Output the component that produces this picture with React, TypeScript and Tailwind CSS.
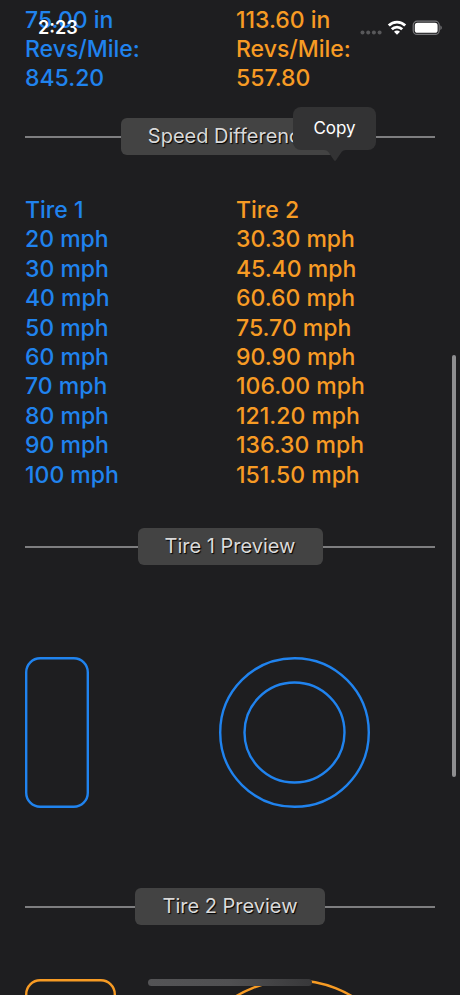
import type { ReactNode } from "react";

const speeds = [
    ["20 mph", "30.30 mph"],
    ["30 mph", "45.40 mph"],
    ["40 mph", "60.60 mph"],
    ["50 mph", "75.70 mph"],
    ["60 mph", "90.90 mph"],
    ["70 mph", "106.00 mph"],
    ["80 mph", "121.20 mph"],
    ["90 mph", "136.30 mph"],
    ["100 mph", "151.50 mph"],
];

function StatusBar() {
    return (
        <div className="absolute inset-x-0 top-0 z-20 flex items-center justify-between pt-4 pr-[18px] pl-[38px] pointer-events-none">
            <time className="text-lg leading-6 font-semibold text-white">2:23</time>
            <svg width="82" height="24" viewBox="0 0 82 24" fill="none">
                <g fill="#58585a">
                    <circle cx="2.5" cy="16.5" r="2" />
                    <circle cx="8.2" cy="16.5" r="2" />
                    <circle cx="13.9" cy="16.5" r="2" />
                    <circle cx="19.6" cy="16.5" r="2" />
                </g>
                <g stroke="#fff" strokeWidth="2.8">
                    <path d="M28.8 9.6a11.6 11.6 0 0 1 16.4 0" />
                    <path d="M31.8 13.2a7.4 7.4 0 0 1 10.4 0" />
                </g>
                <path d="M37 18.8l-3-3a4.2 4.2 0 0 1 6 0z" fill="#fff" />
                <rect x="53.2" y="5.2" width="26" height="13.2" rx="4" stroke="#77777a" strokeWidth="1.2" />
                <rect x="54.8" y="6.8" width="22.8" height="10" rx="2.6" fill="#fff" />
                <path d="M80.4 9.600c1.800.7 1.800 3.700 0 4.400z" fill="#77777a" />
            </svg>
        </div>
    );
}

function Divider({ title, children }: { title: string; children?: ReactNode }) {
    return (
        <div className="relative flex items-center">
            <div className="h-[2px] flex-1 bg-[#7e7e80]" />
            <h2 className="rounded-md bg-[#434343] px-[27px] text-xl leading-[37px] text-[#dadada] [text-shadow:1px_1px_1px_#000]">
                {title}
            </h2>
            <div className="h-[2px] flex-1 bg-[#7e7e80]" />
            {children}
        </div>
    );
}

function CopyMenu() {
    return (
        <button
            type="button"
            className="absolute -top-[11px] right-[59px] z-10 h-[43px] w-[83px] rounded-lg bg-[#333334] text-[17px] text-white"
        >
            Copy
            <svg className="absolute top-full left-[31px]" width="22" height="11" viewBox="0 0 22 11" fill="#333334">
                <path d="M0 0h22c-2 0-3.2.8-4.4 2L12 10.2q-1 1-2 0L4.4 2C3.2.8 2 0 0 0z" />
            </svg>
        </button>
    );
}

// side view on the left, wheel view on the right
function TirePreview({ width, diameter, rim, color }: { width: number; diameter: number; rim: number; color: string }) {
    const r = diameter / 2;
    return (
        <div className={`grid grid-cols-[7fr_13fr] pr-[11px] ${color}`}>
            <svg width={width} height={diameter} fill="none" stroke="currentColor" strokeWidth="2.4">
                <rect x="1.2" y="1.2" width={width - 2.4} height={diameter - 2.4} rx="14" />
            </svg>
            <svg className="justify-self-center" width={diameter} height={diameter} fill="none" stroke="currentColor" strokeWidth="2.4">
                <circle cx={r} cy={r} r={r - 1.2} />
                <circle cx={r} cy={r} r={rim / 2} />
            </svg>
        </div>
    );
}

export default function App() {
    return (
        <div className="relative h-screen overflow-hidden bg-[#1e1e20] font-[Inter,'Liberation_Sans',sans-serif]">
            <StatusBar />

            <main className="h-full overflow-y-auto px-[25px] pt-[6px] [scrollbar-width:none]">
                <div className="grid grid-cols-2 gap-3 pb-[25px] text-[23px] leading-[29px] font-medium">
                    <div className="text-[#2083ee]">
                        <p>75.00 in</p>
                        <p>Revs/Mile:</p>
                        <p>845.20</p>
                    </div>
                    <div className="text-[#f79b24]">
                        <p>113.60 in</p>
                        <p>Revs/Mile:</p>
                        <p>557.80</p>
                    </div>
                </div>

                <Divider title="Speed Difference">
                    <CopyMenu />
                </Divider>

                <table className="mt-[41px] h-[294px] w-full table-fixed text-left text-[23px] leading-[29px] font-medium">
                    <thead>
                        <tr>
                            <th className="w-[211px] p-0 font-medium text-[#2083ee]">Tire 1</th>
                            <th className="p-0 font-medium text-[#f79b24]">Tire 2</th>
                        </tr>
                    </thead>
                    <tbody>
                        {speeds.map(([first, second]) => (
                            <tr key={first}>
                                <td className="p-0 text-[#2083ee]">{first}</td>
                                <td className="p-0 text-[#f79b24]">{second}</td>
                            </tr>
                        ))}
                    </tbody>
                </table>

                <div className="pt-[38px]">
                    <Divider title="Tire 1 Preview" />
                    <div className="pt-[92px] pb-20">
                        <TirePreview width={64} diameter={151} rim={100} color="text-[#2083ee]" />
                    </div>
                    <Divider title="Tire 2 Preview" />
                    <div className="pt-[54px] pb-20">
                        <TirePreview width={91} diameter={228} rim={152} color="text-[#f79b24]" />
                    </div>
                </div>
            </main>

            {/* scroll thumb */}
            <div className="absolute top-[355px] right-1 h-[422px] w-1 rounded-full bg-[#8e8e90]" />

            {/* home indicator */}
            <div className="absolute inset-x-0 bottom-[9px] z-20 mx-auto h-[7px] w-[164px] rounded-full bg-linear-to-r from-[#545456] via-[#505052] to-[#38383a]" />
        </div>
    );
}
